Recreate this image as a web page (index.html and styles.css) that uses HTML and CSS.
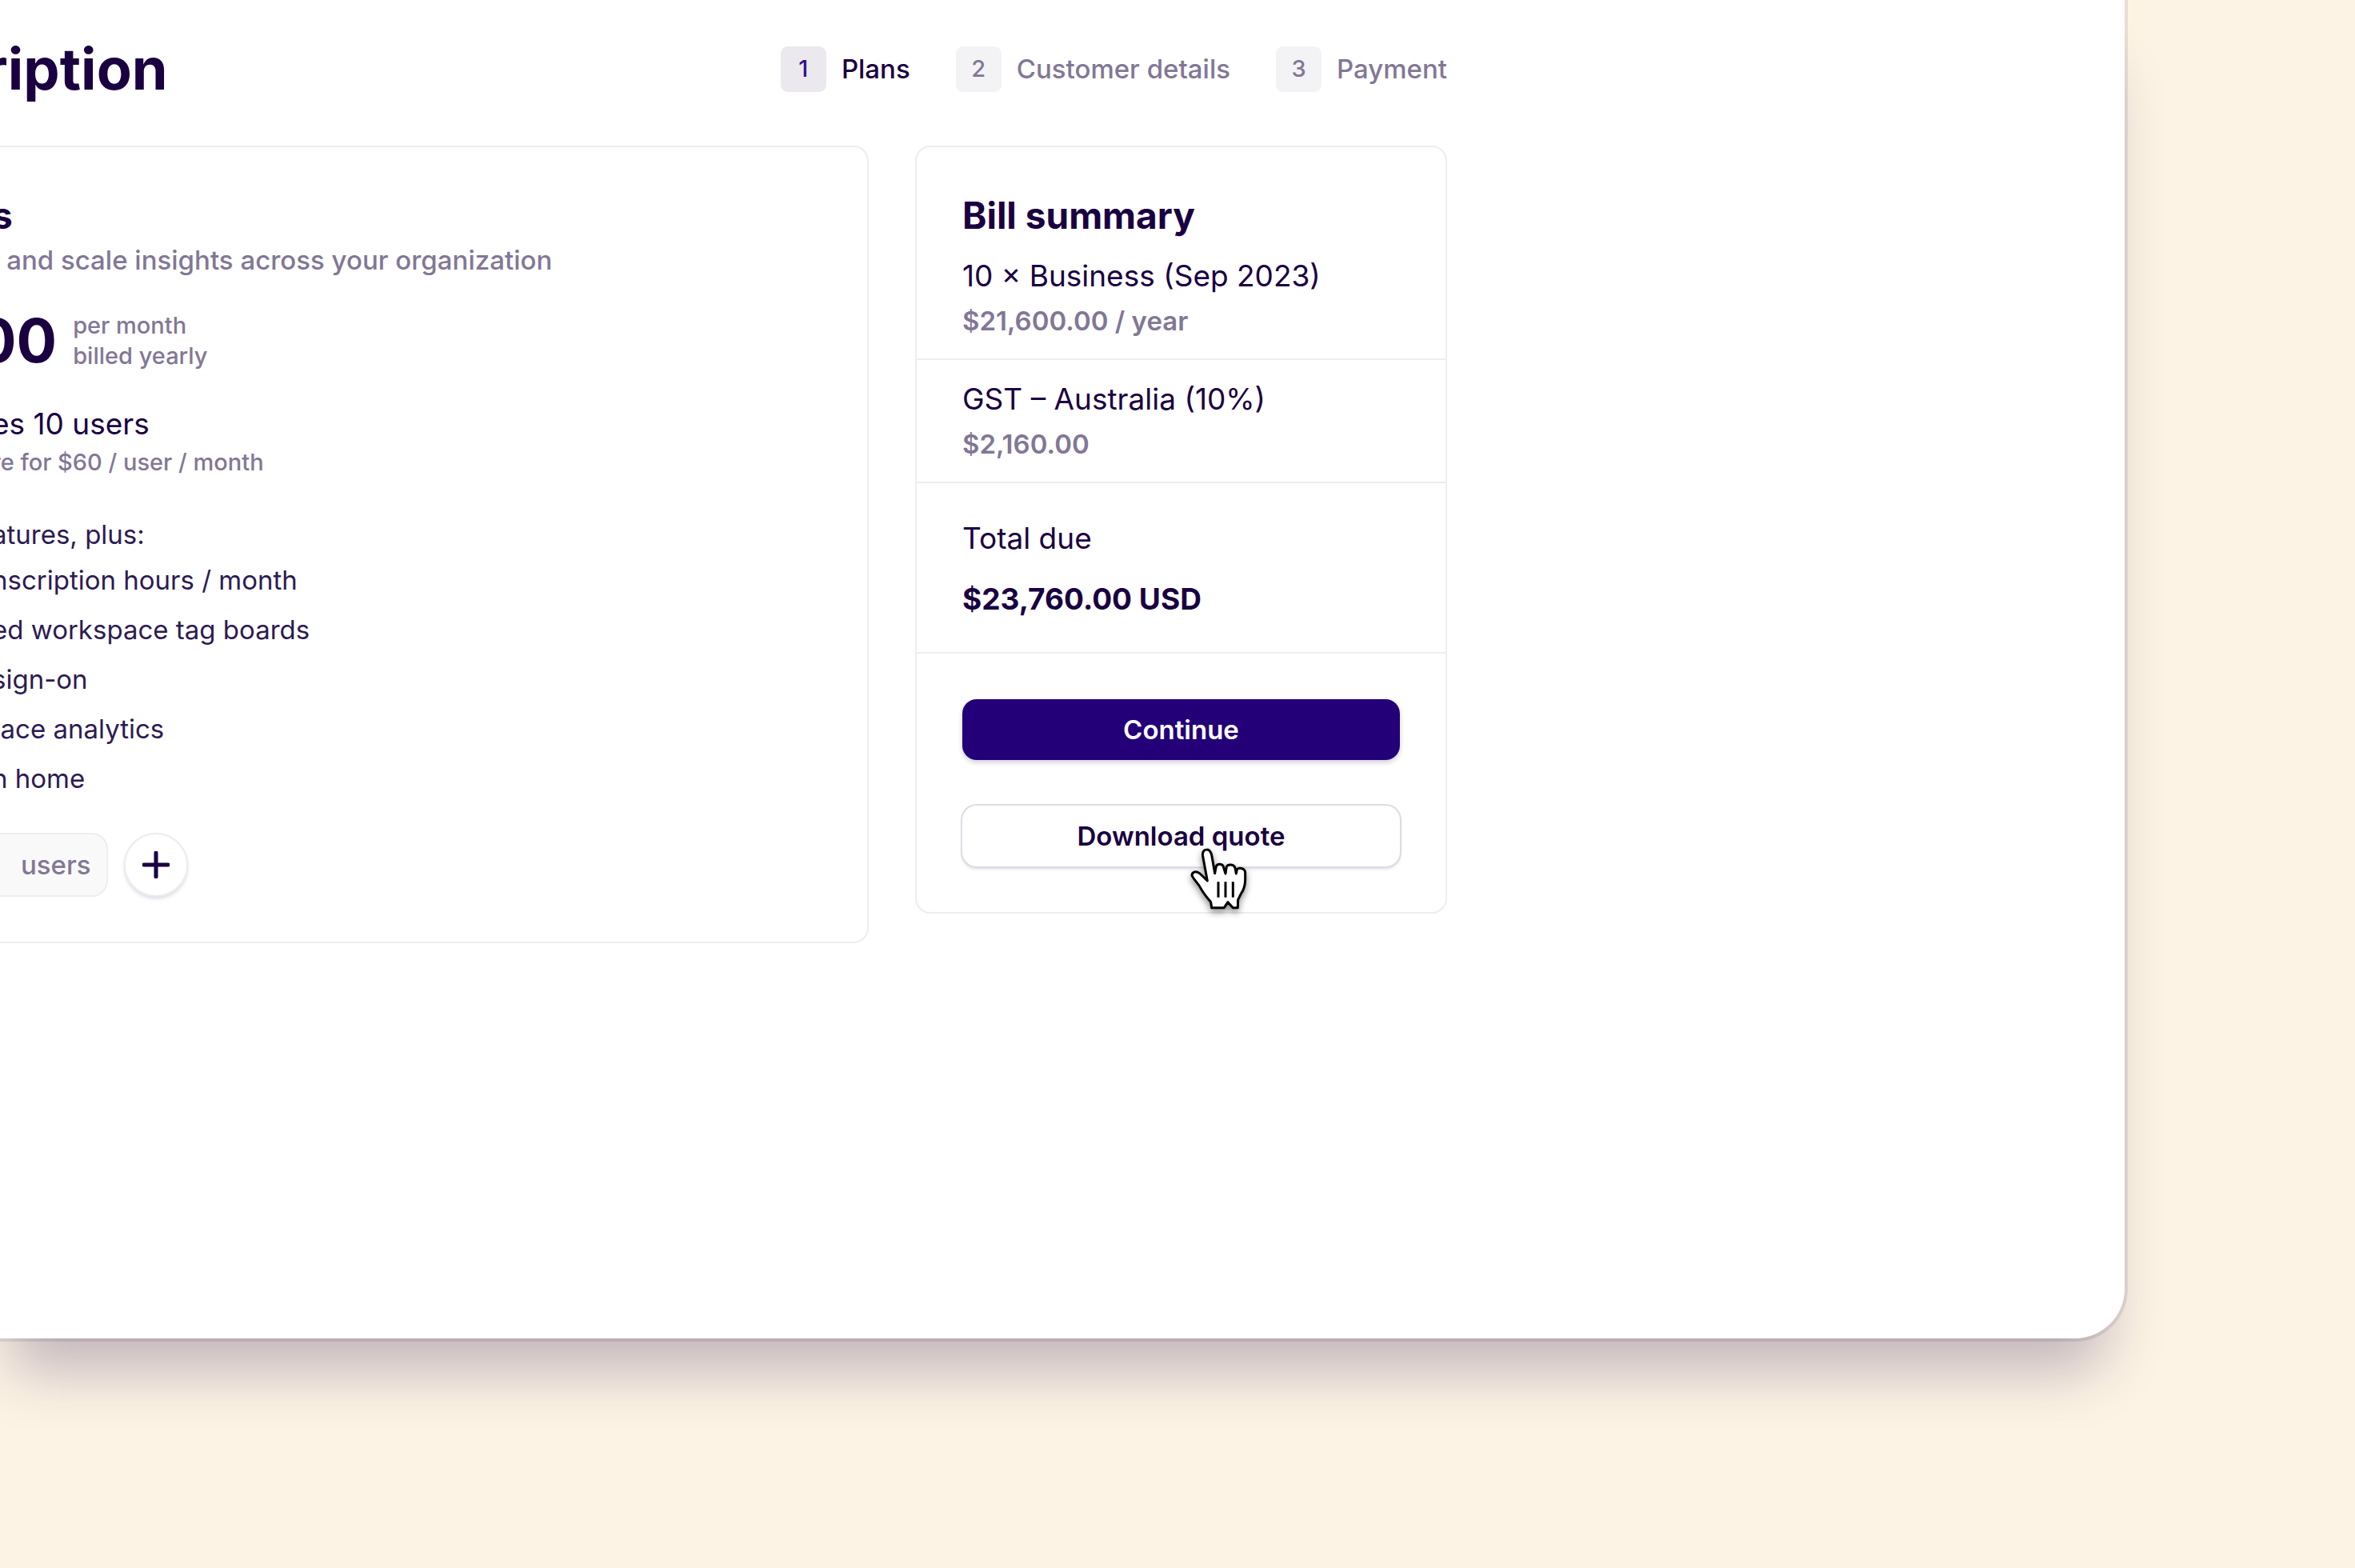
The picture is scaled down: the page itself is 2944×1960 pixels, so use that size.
FILE: index.html
```html
<!DOCTYPE html>
<html lang="en">
<head>
  <meta charset="utf-8">
  <meta name="viewport" content="width=device-width, initial-scale=1">
  <title>Plans</title>
  <link rel="stylesheet" href="styles.css">
</head>
<body>
  <main class="window">
    <header class="header">
      <h1 class="title bleed">ription</h1>
      <ol class="steps">
        <li class="step step-current"><span class="step-number">1</span>Plans</li>
        <li class="step"><span class="step-number">2</span>Customer details</li>
        <li class="step"><span class="step-number">3</span>Payment</li>
      </ol>
    </header>

    <div class="columns">
      <section class="card plan">
        <h2 class="heading">s</h2>
        <p class="note bleed">e and scale insights across your organization</p>
        <div class="price">
          <strong class="amount bleed-wide">00</strong>
          <p class="small">per month<br>billed yearly</p>
        </div>
        <p class="text">es 10 users</p>
        <p class="small rate">re for $60 / user / month</p>
        <p class="feature intro">atures, plus:</p>
        <ul class="features">
          <li class="feature">nscription hours / month</li>
          <li class="feature">ed workspace tag boards</li>
          <li class="feature">sign-on</li>
          <li class="feature bleed">pace analytics</li>
          <li class="feature">n home</li>
        </ul>
        <div class="seats">
          <label class="seats-field"><input class="seats-input" type="text" inputmode="numeric"><span>users</span></label>
          <button class="round-button" type="button" aria-label="Add user">
            <svg class="plus" viewBox="0 0 34 34" aria-hidden="true"><path d="M17 2v30M2 17h30"/></svg>
          </button>
        </div>
      </section>

      <aside class="card bill">
        <div class="bill-part">
          <h2 class="heading bill-heading">Bill summary</h2>
          <p class="text">10 × Business (Sep 2023)</p>
          <p class="note bill-note">$21,600.00 / year</p>
        </div>
        <div class="bill-part">
          <p class="text">GST – Australia (10%)</p>
          <p class="note bill-note">$2,160.00</p>
        </div>
        <div class="bill-part bill-total">
          <p class="text">Total due</p>
          <p class="text total">$23,760.00 USD</p>
        </div>
        <div class="actions">
          <button class="button button-primary" type="button">Continue</button>
          <div class="hovered">
            <button class="button" type="button">Download quote</button>
            <svg class="pointer" viewBox="80 110 231 249" aria-hidden="true">
              <path class="hand" d="M147 125C157 124 164 134 167 150L178 214L183 188C187 177 208 176 211 192L218 215L222 189C227 179 250 179 254 194L258 215L261 200C266 191 290 193 292 210L292 240C291 260 285 278 277 289L265 313L264 343L246 343L227 322L213 343L166 343L163 322C150 306 136 290 127 273C115 249 98 238 92 222C93 206 108 205 122 215L150 242L133 150C130 134 138 125 147 125Z"/>
              <path class="creases" d="M191 246v58M218 246v58M246 246v58"/>
            </svg>
          </div>
        </div>
      </aside>
    </div>
  </main>
</body>
</html>
```
FILE: styles.css
```css
:root {
  --ink: #1a0041;
  --ink-soft: #2d1b52;
  --muted: #827796;
  --line: #ededf0;
  --brand: #230078;
}

* {
  box-sizing: border-box;
}

body {
  margin: 0;
  background: #fdf3e4;
  color: var(--ink);
  font-family: Inter, "Liberation Sans", sans-serif;
  overflow-x: hidden;
}

h1,
h2,
p,
ol,
ul {
  margin: 0;
  padding: 0;
  list-style: none;
}

/* The sheet runs past the top and left of the page. */
.window {
  margin: 0 288px 284px -10px;
  padding: 39px 847px 494px 0;
  background: #fff;
  border-radius: 0 0 62px 0;
  box-shadow:
    0 0 0 4px rgba(25, 0, 70, 0.09),
    0 64px 72px -24px rgba(25, 0, 70, 0.25);
  white-space: nowrap;
}

.header {
  display: flex;
  align-items: center;
  justify-content: space-between;
  margin-bottom: 49px;
}

.title {
  font-size: 72px;
  line-height: 94px;
  font-weight: 700;
}

.steps {
  display: flex;
  gap: 57px;
}

.step {
  display: flex;
  align-items: center;
  gap: 19px;
  color: var(--muted);
  font-size: 33px;
  line-height: 42px;
  font-weight: 500;
}

.step-number {
  display: grid;
  place-items: center;
  width: 57px;
  height: 57px;
  border-radius: 9px;
  background: #f3f2f5;
  font-size: 29px;
}

.step-current {
  color: var(--ink);
}

.step-current .step-number {
  background: #ebe8ee;
  color: #33108a;
}

.columns {
  display: grid;
  grid-template-columns: 1fr 665px;
  gap: 58px;
  align-items: start;
}

.card {
  border: 2px solid var(--line);
  border-radius: 19px;
}

.plan {
  padding: 56px 57px 56px 0;
  border-left: 0;
  border-radius: 0 19px 19px 0;
}

.heading {
  font-size: 46px;
  line-height: 58px;
  font-weight: 700;
}

.text {
  font-size: 37px;
  line-height: 48px;
}

.note {
  color: var(--muted);
  font-size: 33px;
  line-height: 42px;
  font-weight: 500;
}

.small {
  color: var(--muted);
  font-size: 29px;
  line-height: 38px;
  font-weight: 500;
}

.bleed {
  margin-left: -10px;
}

.bleed-wide {
  margin-left: -20px;
}

.plan .note {
  margin-top: 6px;
}

.price {
  display: flex;
  gap: 20px;
  margin: 42px 0;
}

.amount {
  font-size: 75px;
  line-height: 76px;
  font-weight: 700;
}

.rate {
  margin-top: 5px;
}

.feature {
  color: var(--ink-soft);
  font-size: 33px;
  line-height: 42px;
}

.intro {
  margin-top: 50px;
}

.features {
  display: grid;
  gap: 20px;
  margin-top: 15px;
}

.seats {
  display: flex;
  gap: 20px;
  margin-top: 47px;
}

.seats-field {
  display: flex;
  align-items: center;
  height: 80px;
  padding-right: 19px;
  border: 2px solid var(--line);
  border-left: 0;
  border-radius: 0 20px 20px 0;
  background: #f9f9fa;
  color: var(--muted);
  font-size: 33px;
  font-weight: 500;
}

.seats-input {
  width: 36px;
  padding: 0;
  border: 0;
  background: none;
  color: var(--ink);
  font: inherit;
}

.round-button {
  display: grid;
  place-items: center;
  width: 80px;
  height: 80px;
  padding: 0;
  border: 2px solid var(--line);
  border-radius: 50%;
  background: #fff;
  box-shadow: 0 3px 4px rgba(25, 0, 70, 0.13);
}

.plus {
  width: 34px;
  height: 34px;
  fill: none;
  stroke: var(--ink);
  stroke-width: 5;
  stroke-linecap: round;
}

.bill-part {
  padding: 25px 57px 26px;
  border-bottom: 2px solid var(--line);
}

.bill-part:first-child {
  padding-top: 56px;
}

.bill-heading {
  margin-bottom: 23px;
}

.bill-note {
  margin-top: 11px;
  font-weight: 600;
}

.bill-total {
  padding-top: 45px;
  padding-bottom: 42px;
}

.total {
  margin-top: 28px;
  font-weight: 700;
}

.actions {
  display: grid;
  gap: 57px;
  padding: 57px;
}

.button {
  display: block;
  width: 100%;
  height: 76px;
  padding: 0;
  border: 0;
  border-radius: 18px;
  background: #fff;
  color: var(--ink);
  font: 600 33px/42px Inter, "Liberation Sans", sans-serif;
  box-shadow:
    0 0 0 2px #dedbe4,
    0 3px 4px rgba(25, 0, 70, 0.17);
}

.button-primary {
  background: var(--brand);
  color: #fff;
  box-shadow: 0 3px 6px rgba(25, 0, 70, 0.2);
}

.hovered {
  position: relative;
}

.pointer {
  position: absolute;
  top: 50px;
  left: calc(50% + 9px);
  width: 77px;
  height: 83px;
  overflow: visible;
  filter: drop-shadow(0 4px 4px rgba(0, 0, 0, 0.45));
}

.hand {
  fill: #fff;
  stroke: #000;
  stroke-width: 9;
  stroke-linejoin: round;
}

.creases {
  fill: none;
  stroke: #000;
  stroke-width: 9;
}
```
